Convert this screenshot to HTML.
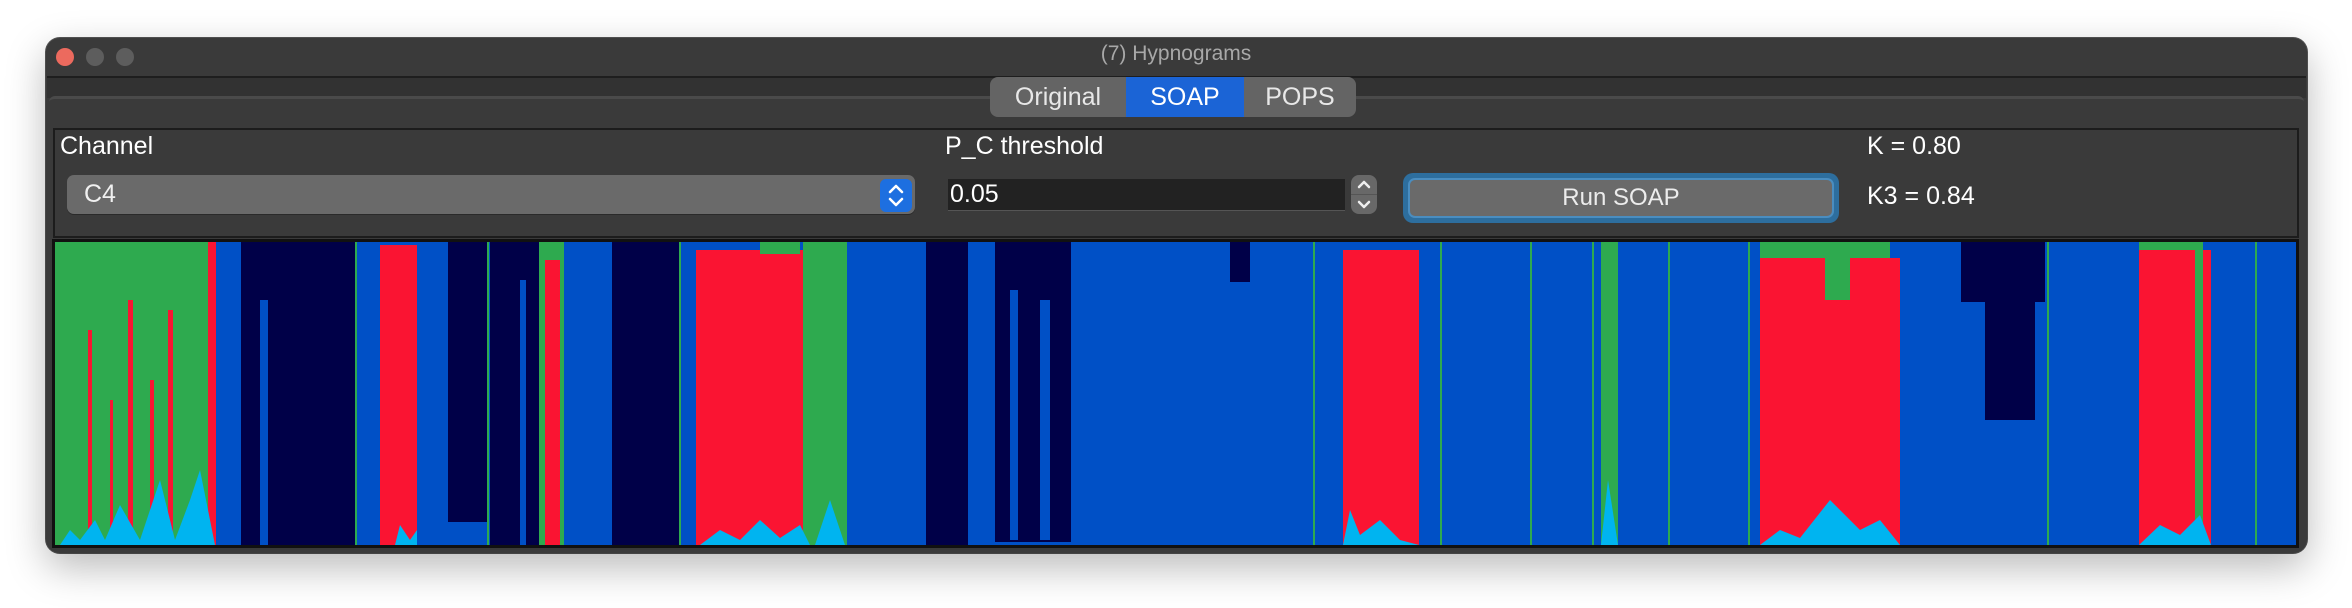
<!DOCTYPE html>
<html><head><meta charset="utf-8"><style>
*{margin:0;padding:0;box-sizing:border-box}
body{width:2352px;height:608px;background:#fff;position:relative;overflow:hidden;font-family:"Liberation Sans",sans-serif}
.a{position:absolute}
.win{left:46px;top:38px;width:2261px;height:515px;background:#3a3a3a;border-radius:14px;box-shadow:0 14px 40px rgba(0,0,0,.28),0 0 0 1px #555;overflow:hidden}
.t{color:#fff;font-size:25px}
</style></head><body>
<div class="a win">
</div>
<div class="a" style="left:47px;top:76px;width:2259px;height:2px;background:#1e1e1e"></div>
<div class="a" style="left:47px;top:78px;width:2259px;height:20px;background:#323232"></div>
<div class="a" style="left:49px;top:96px;width:2255px;height:455px;border-top:3px solid #4a4a4a;border-radius:6px;background:#3a3a3a"></div>
<div class="a" style="left:56px;top:48px;width:18px;height:18px;border-radius:50%;background:#ec6a5e"></div>
<div class="a" style="left:86px;top:48px;width:18px;height:18px;border-radius:50%;background:#5d5d5d"></div>
<div class="a" style="left:116px;top:48px;width:18px;height:18px;border-radius:50%;background:#5d5d5d"></div>
<div class="a" style="left:0;width:2352px;top:42px;text-align:center;color:#a8a8a8;font-size:21px">(7) Hypnograms</div>
<!-- tabs -->
<div class="a" style="left:990px;top:77px;width:366px;height:40px;border-radius:8px;background:#646464;overflow:hidden;font-size:25px;color:#e8e8e8">
<div class="a" style="left:0;top:0;width:136px;height:40px;line-height:40px;text-align:center">Original</div>
<div class="a" style="left:136px;top:0;width:118px;height:40px;line-height:40px;text-align:center;background:#1b64d6;color:#fff">SOAP</div>
<div class="a" style="left:254px;top:0;width:112px;height:40px;line-height:40px;text-align:center">POPS</div>
</div>
<!-- group -->
<div class="a" style="left:53px;top:128px;width:2246px;height:110px;border:2px solid #1c1c1c;background:#3a3a3a"></div>
<div class="a t" style="left:60px;top:132px">Channel</div>
<div class="a t" style="left:945px;top:132px">P_C threshold</div>
<div class="a t" style="left:1867px;top:132px">K = 0.80</div>
<div class="a t" style="left:1867px;top:182px">K3 = 0.84</div>
<div class="a" style="left:67px;top:175px;width:848px;height:39px;border-radius:7px;background:#6a6a6a;box-shadow:0 1px 0 #2a2a2a"></div>
<div class="a t" style="left:84px;top:180px;color:#f0f0f0">C4</div>
<div class="a" style="left:880px;top:179px;width:32px;height:33px;border-radius:6px;background:#1d6fe0"></div>
<svg class="a" style="left:880px;top:179px" width="32" height="33"><path d="M10 13 L16 7 L22 13 M10 20 L16 26 L22 20" stroke="#fff" stroke-width="2.5" fill="none" stroke-linecap="round" stroke-linejoin="round"/></svg>
<div class="a" style="left:948px;top:179px;width:397px;height:32px;background:#222;border-bottom:1px solid #555"></div>
<div class="a t" style="left:950px;top:180px">0.05</div>
<div class="a" style="left:1351px;top:175px;width:26px;height:39px;border-radius:8px;background:#686868"></div>
<div class="a" style="left:1351px;top:194px;width:26px;height:1px;background:#555"></div>
<svg class="a" style="left:1351px;top:175px" width="26" height="39"><path d="M8 12 L13 7 L18 12 M8 27 L13 32 L18 27" stroke="#eee" stroke-width="2.5" fill="none" stroke-linecap="round" stroke-linejoin="round"/></svg>
<div class="a" style="left:1403px;top:173px;width:436px;height:50px;border-radius:10px;background:#2d6e9e"></div>
<div class="a" style="left:1408px;top:178px;width:426px;height:40px;border-radius:7px;background:#6a6a6a;border:2px solid #4a8dc0;line-height:36px;text-align:center;color:#ececec;font-size:24px">Run SOAP</div>
<!-- chart -->
<div class="a" style="left:52px;top:239px;width:2247px;height:309px;background:#111"></div>
<svg class="a" style="left:55px;top:242px" width="2241" height="303" viewBox="55 242 2241 303" preserveAspectRatio="none">
<rect x="55" y="242" width="2241" height="303" fill="#0050c6"/>
<g fill="#2eaa4f"><rect x="55" y="242" width="161" height="303"/><rect x="539" y="242" width="25" height="303"/><rect x="803" y="242" width="44" height="303"/><rect x="1601" y="242" width="17" height="303"/><rect x="2195" y="242" width="8" height="303"/></g>
<g fill="#fa1432"><rect x="208" y="242" width="8" height="303"/><rect x="128" y="300" width="5" height="245"/><rect x="88" y="330" width="4" height="215"/><rect x="168" y="310" width="5" height="235"/><rect x="150" y="380" width="4" height="165"/><rect x="110" y="400" width="3" height="145"/><rect x="380" y="245" width="37" height="300"/><rect x="545" y="260" width="15" height="285"/><rect x="696" y="250" width="107" height="295"/><rect x="1343" y="250" width="76" height="295"/><rect x="1760" y="258" width="140" height="287"/><rect x="2139" y="248" width="56" height="297"/><rect x="2203" y="250" width="8" height="295"/></g>
<g fill="#2eaa4f"><rect x="760" y="242" width="40" height="12"/><rect x="1760" y="242" width="130" height="16"/><rect x="1825" y="255" width="25" height="45"/><rect x="2139" y="242" width="60" height="8"/></g>
<g fill="#000048"><rect x="241" y="242" width="116" height="303"/><rect x="448" y="242" width="40" height="280"/><rect x="490" y="242" width="49" height="303"/><rect x="612" y="242" width="67" height="303"/><rect x="926" y="242" width="42" height="303"/><rect x="995" y="242" width="76" height="300"/><rect x="1961" y="242" width="84" height="60"/><rect x="1985" y="300" width="50" height="120"/><rect x="1230" y="242" width="20" height="40"/></g>
<g fill="#0050c6"><rect x="1010" y="290" width="8" height="250"/><rect x="1040" y="300" width="10" height="240"/><rect x="260" y="300" width="8" height="245"/><rect x="520" y="280" width="6" height="265"/></g>
<g fill="#2eaa4f"><rect x="355" y="242" width="2" height="303"/><rect x="487" y="242" width="2" height="303"/><rect x="679" y="242" width="2" height="303"/><rect x="1313" y="242" width="2" height="303"/><rect x="1440" y="242" width="2" height="303"/><rect x="1530" y="242" width="2" height="303"/><rect x="1592" y="242" width="2" height="303"/><rect x="1668" y="242" width="2" height="303"/><rect x="1748" y="242" width="2" height="303"/><rect x="2047" y="242" width="2" height="303"/><rect x="2255" y="242" width="2" height="303"/></g>
<g fill="#00b4f0"><polygon points="60,545 70,530 80,540 95,520 105,540 120,505 140,540 160,480 175,540 190,500 200,470 215,545"/><polygon points="395,545 400,525 410,540 417,530 417,545"/><polygon points="700,545 720,530 740,540 760,520 780,538 800,525 810,545"/><polygon points="815,545 830,500 845,545"/><polygon points="1343,545 1350,510 1360,535 1380,520 1400,540 1419,545"/><polygon points="1601,545 1608,480 1618,545"/><polygon points="1760,545 1780,530 1800,538 1830,500 1860,530 1880,520 1900,545"/><polygon points="2139,545 2160,525 2180,535 2200,515 2211,545"/></g>
</svg>
</body></html>
